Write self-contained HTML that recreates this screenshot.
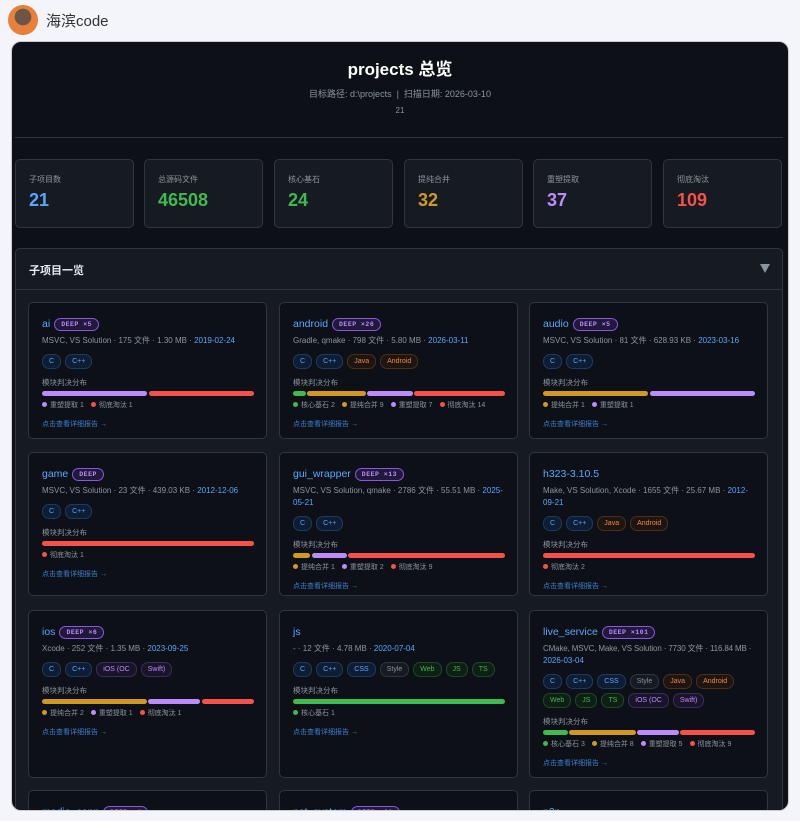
<!DOCTYPE html>
<html><head><meta charset="utf-8"><style>
*{box-sizing:border-box;margin:0;padding:0}
html,body{width:800px;height:821px;overflow:hidden}
body{background:#f3f5fa;font-family:"Liberation Sans","Noto Sans CJK SC",sans-serif;position:relative}
.av{position:absolute;left:8px;top:5px;width:30px;height:30px;border-radius:50%;background:radial-gradient(circle at 50% 40%,#6b5648 0 35%,#e8803a 36%);overflow:hidden}
.hn{position:absolute;left:46px;top:10px;font-size:15px;color:#333}
.panel{position:absolute;left:11px;top:41px;width:778px;height:770px;background:#0d1117;border-radius:10px;overflow:hidden;border:1px solid #ccc}
.title{position:absolute;top:13px;left:0;width:100%;text-align:center;color:#fff;font-weight:bold;font-size:17px}
.sub{position:absolute;top:45px;width:100%;text-align:center;color:#8b949e;font-size:9px}
.n21{position:absolute;top:64px;width:100%;text-align:center;color:#8b949e;font-size:8px}
.hr{position:absolute;left:3px;right:5px;top:95px;height:1px;background:#30363d}
.stat{position:absolute;top:117px;width:119px;height:69px;background:#161b22;border:1px solid #30363d;border-radius:5px;padding:0 0 0 13px}
.stat .l{font-size:8px;color:#8b949e;margin-top:14px}
.stat .v{font-size:18px;font-weight:bold;margin-top:5px}
.sec{position:absolute;left:3px;top:206px;width:768px;height:600px;background:#161b22;border:1px solid #30363d;border-radius:5px;overflow:hidden}
.sh{height:41px;border-bottom:1px solid #30363d;padding:13px 0 0 13px;color:#e6edf3;font-weight:bold;font-size:11px;position:relative}
.tri{position:absolute;right:12px;top:15px;width:0;height:0;border-left:5px solid transparent;border-right:5px solid transparent;border-top:9px solid #8b949e}
.card{position:absolute;width:239px;background:#0d1117;border:1px solid #30363d;border-radius:5px;padding:14px 12px 0 13px}
.nm{color:#58a6ff;font-size:10.5px;display:flex;align-items:center;gap:4px;height:14px}
.dp{font-size:6.5px;font-weight:bold;letter-spacing:.5px;color:#bc8cff;border:1px solid #8957e5;background:#21183a;border-radius:8px;padding:2px 6px;font-family:"Liberation Mono",monospace}
.mt{font-size:8px;color:#8b949e;margin-top:4px;line-height:12px}
.mt b{font-weight:normal;color:#58a6ff}
.tg{display:flex;flex-wrap:wrap;gap:4px;margin-top:7px}
.tg span{font-size:7px;border-radius:7px;padding:3px 6px;border:1px solid}
.b{color:#58a6ff;border-color:#1f3a5f!important;background:#0d1d33}
.o{color:#f0883e;border-color:#4a2f1a!important;background:#1f1510}
.g{color:#3fb950;border-color:#1b4a26!important;background:#0f1f14}
.y{color:#8b949e;border-color:#30363d!important;background:#161b22}
.p{color:#bc8cff;border-color:#3d2a5c!important;background:#1a1428}
.dl{font-size:7.5px;color:#8b949e;margin-top:8px}
.bar{display:flex;gap:1.5px;height:5px;margin-top:3px}
.bar i{display:block;height:5px;border-radius:3px}
.lg{font-size:7px;color:#8b949e;margin-top:4px;display:flex;gap:7px}
.lg span:before{content:"";display:inline-block;width:5px;height:5px;border-radius:50%;background:var(--c);margin-right:3px}
.lk{font-size:7px;color:#3b7fd0;margin-top:9px}
</style></head><body>
<div class="av"></div><div class="hn">海滨code</div>
<div class="panel">
<div class="title">projects 总览</div>
<div class="sub">目标路径: d:\projects &nbsp;|&nbsp; 扫描日期: 2026-03-10</div>
<div class="n21">21</div>
<div class="hr"></div>
<div class="stat" style="left:3px"><div class="l">子项目数</div><div class="v" style="color:#58a6ff">21</div></div>
<div class="stat" style="left:132px"><div class="l">总源码文件</div><div class="v" style="color:#3fb950">46508</div></div>
<div class="stat" style="left:262px"><div class="l">核心基石</div><div class="v" style="color:#3fb950">24</div></div>
<div class="stat" style="left:392px"><div class="l">提纯合并</div><div class="v" style="color:#d29922">32</div></div>
<div class="stat" style="left:521px"><div class="l">重塑提取</div><div class="v" style="color:#bc8cff">37</div></div>
<div class="stat" style="left:651px"><div class="l">彻底淘汰</div><div class="v" style="color:#f85149">109</div></div>
<div class="sec"><div class="sh">子项目一览<div class="tri"></div></div>

<div class="card" style="left:12px;top:53px;height:137px">
<div class="nm">ai <span class="dp">DEEP ×5</span></div>
<div class="mt">MSVC, VS Solution · 175 文件 · 1.30 MB · <b>2019-02-24</b></div>
<div class="tg"><span class="b">C</span><span class="b">C++</span></div>
<div class="dl">模块判决分布</div>
<div class="bar"><i style="flex:1;background:#bc8cff"></i><i style="flex:1;background:#f85149"></i></div>
<div class="lg"><span style="--c:#bc8cff">重塑提取 1</span><span style="--c:#f85149">彻底淘汰 1</span></div>
<div class="lk">点击查看详细报告 →</div></div>

<div class="card" style="left:263px;top:53px;height:137px">
<div class="nm">android <span class="dp">DEEP ×26</span></div>
<div class="mt">Gradle, qmake · 798 文件 · 5.80 MB · <b>2026-03-11</b></div>
<div class="tg"><span class="b">C</span><span class="b">C++</span><span class="o">Java</span><span class="o">Android</span></div>
<div class="dl">模块判决分布</div>
<div class="bar"><i style="flex:2;background:#3fb950"></i><i style="flex:9;background:#d29922"></i><i style="flex:7;background:#bc8cff"></i><i style="flex:14;background:#f85149"></i></div>
<div class="lg"><span style="--c:#3fb950">核心基石 2</span><span style="--c:#d29922">提纯合并 9</span><span style="--c:#bc8cff">重塑提取 7</span><span style="--c:#f85149">彻底淘汰 14</span></div>
<div class="lk">点击查看详细报告 →</div></div>

<div class="card" style="left:513px;top:53px;height:137px">
<div class="nm">audio <span class="dp">DEEP ×5</span></div>
<div class="mt">MSVC, VS Solution · 81 文件 · 628.93 KB · <b>2023-03-16</b></div>
<div class="tg"><span class="b">C</span><span class="b">C++</span></div>
<div class="dl">模块判决分布</div>
<div class="bar"><i style="flex:1;background:#d29922"></i><i style="flex:1;background:#bc8cff"></i></div>
<div class="lg"><span style="--c:#d29922">提纯合并 1</span><span style="--c:#bc8cff">重塑提取 1</span></div>
<div class="lk">点击查看详细报告 →</div></div>

<div class="card" style="left:12px;top:203px;height:144px">
<div class="nm">game <span class="dp">DEEP</span></div>
<div class="mt">MSVC, VS Solution · 23 文件 · 439.03 KB · <b>2012-12-06</b></div>
<div class="tg"><span class="b">C</span><span class="b">C++</span></div>
<div class="dl">模块判决分布</div>
<div class="bar"><i style="flex:1;background:#f85149"></i></div>
<div class="lg"><span style="--c:#f85149">彻底淘汰 1</span></div>
<div class="lk">点击查看详细报告 →</div></div>

<div class="card" style="left:263px;top:203px;height:144px">
<div class="nm">gui_wrapper <span class="dp">DEEP ×13</span></div>
<div class="mt">MSVC, VS Solution, qmake · 2786 文件 · 55.51 MB · <b>2025-05-21</b></div>
<div class="tg"><span class="b">C</span><span class="b">C++</span></div>
<div class="dl">模块判决分布</div>
<div class="bar"><i style="flex:1;background:#d29922"></i><i style="flex:2;background:#bc8cff"></i><i style="flex:9;background:#f85149"></i></div>
<div class="lg"><span style="--c:#d29922">提纯合并 1</span><span style="--c:#bc8cff">重塑提取 2</span><span style="--c:#f85149">彻底淘汰 9</span></div>
<div class="lk">点击查看详细报告 →</div></div>

<div class="card" style="left:513px;top:203px;height:144px">
<div class="nm">h323-3.10.5</div>
<div class="mt">Make, VS Solution, Xcode · 1655 文件 · 25.67 MB · <b>2012-09-21</b></div>
<div class="tg"><span class="b">C</span><span class="b">C++</span><span class="o">Java</span><span class="o">Android</span></div>
<div class="dl">模块判决分布</div>
<div class="bar"><i style="flex:1;background:#f85149"></i></div>
<div class="lg"><span style="--c:#f85149">彻底淘汰 2</span></div>
<div class="lk">点击查看详细报告 →</div></div>

<div class="card" style="left:12px;top:361px;height:168px">
<div class="nm">ios <span class="dp">DEEP ×6</span></div>
<div class="mt">Xcode · 252 文件 · 1.35 MB · <b>2023-09-25</b></div>
<div class="tg"><span class="b">C</span><span class="b">C++</span><span class="p">iOS (OC</span><span class="p">Swift)</span></div>
<div class="dl">模块判决分布</div>
<div class="bar"><i style="flex:2;background:#d29922"></i><i style="flex:1;background:#bc8cff"></i><i style="flex:1;background:#f85149"></i></div>
<div class="lg"><span style="--c:#d29922">提纯合并 2</span><span style="--c:#bc8cff">重塑提取 1</span><span style="--c:#f85149">彻底淘汰 1</span></div>
<div class="lk">点击查看详细报告 →</div></div>

<div class="card" style="left:263px;top:361px;height:168px">
<div class="nm">js</div>
<div class="mt">- · 12 文件 · 4.78 MB · <b>2020-07-04</b></div>
<div class="tg"><span class="b">C</span><span class="b">C++</span><span class="b">CSS</span><span class="y">Style</span><span class="g">Web</span><span class="g">JS</span><span class="g">TS</span></div>
<div class="dl">模块判决分布</div>
<div class="bar"><i style="flex:1;background:#3fb950"></i></div>
<div class="lg"><span style="--c:#3fb950">核心基石 1</span></div>
<div class="lk">点击查看详细报告 →</div></div>

<div class="card" style="left:513px;top:361px;height:168px">
<div class="nm">live_service <span class="dp">DEEP ×101</span></div>
<div class="mt"><span style="white-space:nowrap;letter-spacing:-0.15px">CMake, MSVC, Make, VS Solution · 7730 文件 · 116.84 MB ·</span><br><b>2026-03-04</b></div>
<div class="tg"><span class="b">C</span><span class="b">C++</span><span class="b">CSS</span><span class="y">Style</span><span class="o">Java</span><span class="o">Android</span><span class="g">Web</span><span class="g">JS</span><span class="g">TS</span><span class="p">iOS (OC</span><span class="p">Swift)</span></div>
<div class="dl">模块判决分布</div>
<div class="bar"><i style="flex:3;background:#3fb950"></i><i style="flex:8;background:#d29922"></i><i style="flex:5;background:#bc8cff"></i><i style="flex:9;background:#f85149"></i></div>
<div class="lg"><span style="--c:#3fb950">核心基石 3</span><span style="--c:#d29922">提纯合并 8</span><span style="--c:#bc8cff">重塑提取 5</span><span style="--c:#f85149">彻底淘汰 9</span></div>
<div class="lk">点击查看详细报告 →</div></div>

<div class="card" style="left:12px;top:541px;height:60px"><div class="nm">media_capp <span class="dp">DEEP ×4</span></div></div>
<div class="card" style="left:263px;top:541px;height:60px"><div class="nm">net_system <span class="dp">DEEP ×21</span></div></div>
<div class="card" style="left:513px;top:541px;height:60px"><div class="nm">p2p</div></div>
</div>
</div>
</body></html>
